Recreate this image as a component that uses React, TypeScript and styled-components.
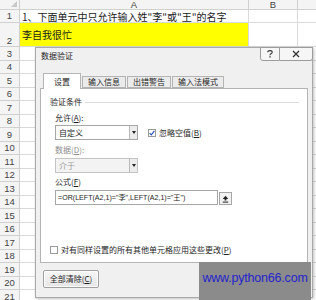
import { createGlobalStyle, styled } from "styled-components";

const GlobalStyle = createGlobalStyle`
  *, *::before, *::after { box-sizing: border-box; }
  html, body { margin: 0; padding: 0; background: #fff; }
  body {
    width: 316px;
    height: 300px;
    overflow: hidden;
    font-family: "Noto Sans CJK SC", sans-serif;
  }
`;

const Page = styled.div`
  position: relative;
  width: 316px;
  height: 300px;
  overflow: hidden;
`;

const Sheet = styled.div`
  display: grid;
  grid-template-columns: 20px 229px 49px 40px;
  grid-template-rows: 10px 13px 24px repeat(20, 13.5px);
`;

const Cell = styled.div<{ $fill?: string; $top?: boolean }>`
  border-right: 1px solid #dadada;
  border-bottom: 1px solid #dadada;
  background: ${(p) => p.$fill ?? "#fff"};
  font-size: 10px;
  color: #1a1a1a;
  white-space: nowrap;
  overflow: visible;
  display: flex;
  align-items: ${(p) => (p.$top ? "flex-start" : "center")};
  padding: ${(p) => (p.$top ? "4px" : "0")} 0 0 2px;
`;

const Head = styled.div<{ $align?: string }>`
  border-right: 1px solid #d0d0d0;
  border-bottom: 1px solid #d0d0d0;
  background: #f4f4f4;
  color: #444;
  font-family: "Liberation Sans", sans-serif;
  font-size: 9.5px;
  display: flex;
  justify-content: center;
  align-items: ${(p) => p.$align ?? "center"};
  padding-bottom: ${(p) => (p.$align === "flex-end" ? "1px" : "0")};
  line-height: 1;
`;

const Corner = styled(Head)`
  position: relative;
  &::after {
    content: "";
    position: absolute;
    right: 2px;
    bottom: 2px;
    border-left: 6px solid transparent;
    border-bottom: 6px solid #c8c8c8;
  }
`;

const Dialog = styled.div`
  position: absolute;
  left: 35px;
  top: 47px;
  width: 278px;
  height: 251px;
  background: #f0f0f0;
  border: 1px solid #a9a9a9;
  box-shadow: 1px 1px 3px rgba(0, 0, 0, 0.25);
  display: flex;
  flex-direction: column;
  font-family: "Noto Sans CJK SC", sans-serif;
  font-size: 8px;
  line-height: 12px;
  color: #1e1e1e;
`;

const TitleBar = styled.div`
  height: 16px;
  display: flex;
`;

const Title = styled.div`
  flex: 1;
  padding-left: 5px;
  align-self: center;
`;

const Controls = styled.div`
  display: flex;
  margin: -1px -1px 0 0;
  align-self: flex-start;
`;

const CtrlButton = styled.div<{ $w: number }>`
  width: ${(p) => p.$w}px;
  height: 14px;
  border: 1px solid #9c9c9c;
  background: #f6f6f6;
  display: flex;
  align-items: center;
  justify-content: center;
  & + & { border-left: none; }
  &:first-child { border-bottom-left-radius: 3px; }
  &:last-child { border-bottom-right-radius: 3px; }
`;

const Body = styled.div`
  padding: 9px 4px 0 4px;
  display: flex;
  flex-direction: column;
`;

const Tabs = styled.div`
  display: flex;
  align-items: flex-end;
  height: 15px;
  margin-left: 3px;
  position: relative;
  z-index: 1;
`;

const Tab = styled.div<{ $active?: boolean }>`
  height: ${(p) => (p.$active ? 16 : 12)}px;
  padding: 0 ${(p) => (p.$active ? 10 : 5)}px;
  border: 1px solid #b4b4b4;
  border-bottom: ${(p) => (p.$active ? "none" : "1px solid #b4b4b4")};
  background: ${(p) => (p.$active ? "#fff" : "#ebebeb")};
  margin-left: ${(p) => (p.$active ? 0 : 1)}px;
  display: flex;
  align-items: center;
  line-height: 10px;
  margin-bottom: ${(p) => (p.$active ? -1 : 0)}px;
`;

const Panel = styled.div`
  height: 175px;
  background: #fff;
  border: 1px solid #b4b4b4;
  padding: 7px 8px 0 9px;
  display: flex;
  flex-direction: column;
`;

const Group = styled.div`
  display: flex;
  align-items: center;
  gap: 3px;
  &::after {
    content: "";
    flex: 1;
    height: 1px;
    background: #dcdcdc;
  }
`;

const Field = styled.div`
  margin-left: 5px;
  display: flex;
  flex-direction: column;
`;

const Label = styled.div<{ $gap: number; $muted?: boolean }>`
  margin-top: ${(p) => p.$gap}px;
  color: ${(p) => (p.$muted ? "#8d8d8d" : "#1e1e1e")};
`;

const Line = styled.div<{ $gap: number }>`
  margin-top: ${(p) => p.$gap}px;
  display: flex;
  align-items: center;
`;

const Select = styled.div<{ $disabled?: boolean }>`
  width: 83px;
  height: 15px;
  border: 1px solid ${(p) => (p.$disabled ? "#c4c4c4" : "#a6a6a6")};
  background: ${(p) => (p.$disabled ? "#f3f3f3" : "#fff")};
  color: ${(p) => (p.$disabled ? "#9a9a9a" : "#1e1e1e")};
  display: flex;
  align-items: center;
  padding-left: 3px;
`;

const SelectText = styled.div`
  flex: 1;
`;

const Arrow = styled.div`
  width: 8px;
  height: 13px;
  border-left: 1px solid #b8b8b8;
  background: #ececec;
  display: flex;
  align-items: center;
  justify-content: center;
  &::after {
    content: "";
    border-left: 2.5px solid transparent;
    border-right: 2.5px solid transparent;
    border-top: 3px solid #222;
  }
`;

const Check = styled.div`
  width: 8px;
  height: 8px;
  border: 1px solid #9a9a9a;
  background: #fff;
  display: flex;
  align-items: center;
  justify-content: center;
`;

const CheckLabel = styled.div`
  display: flex;
  align-items: center;
  gap: 3px;
  margin-left: 10px;
`;

const Formula = styled.div`
  width: 163px;
  height: 15px;
  border: 1px solid #a6a6a6;
  background: #fff;
  padding-left: 2px;
  display: flex;
  align-items: center;
  white-space: nowrap;
  overflow: hidden;
  font-family: "Liberation Sans", "Noto Sans CJK SC", sans-serif;
  font-size: 7.1px;
`;

const RangeButton = styled.div`
  width: 13px;
  height: 13px;
  margin-left: 1px;
  margin-top: 2px;
  border: 1px solid #a6a6a6;
  background: #f2f2f2;
  display: flex;
  align-items: center;
  justify-content: center;
`;

const ApplyRow = styled.div`
  margin-top: auto;
  margin-bottom: 6px;
  display: flex;
  align-items: center;
  gap: 3px;
  white-space: nowrap;
`;

const Footer = styled.div`
  padding: 7px 0 0 3px;
`;

const Button = styled.div`
  width: 56px;
  height: 18px;
  border: 1px solid #a0a0a0;
  border-radius: 2px;
  background: linear-gradient(#f6f6f6, #e6e6e6);
  box-shadow: inset 0 0 0 1px #fdfdfd;
  display: flex;
  align-items: center;
  justify-content: center;
`;

const Watermark = styled.div`
  position: absolute;
  left: 199px;
  top: 262px;
  width: 112px;
  height: 38px;
  background: #8b8b8b;
  display: flex;
  align-items: center;
  justify-content: center;
  padding-bottom: 6px;
  color: #2424cc;
  font-family: "Liberation Sans", sans-serif;
  font-size: 12.5px;
  letter-spacing: -0.2px;
`;

const rows = Array.from({ length: 20 }, (_, i) => i + 3);

export default function App() {
  return (
    <Page>
      <GlobalStyle />
      <Sheet>
        <Corner />
        <Head>A</Head>
        <Head>B</Head>
        <Head />

        <Head>1</Head>
        <Cell>1、下面单元中只允许输入姓"李"或"王"的名字</Cell>
        <Cell />
        <Cell />

        <Head $align="flex-end">2</Head>
        <Cell $fill="#ffff00" $top>
          李自我很忙
        </Cell>
        <Cell />
        <Cell />

        {rows.map((r) => (
          <RowCells key={r} n={r} />
        ))}
      </Sheet>

      <Dialog>
        <TitleBar>
          <Title>数据验证</Title>
          <Controls>
            <CtrlButton $w={20}>
              <svg width="6" height="8" viewBox="0 0 6 8">
                <path d="M0.8 2.2 Q0.8 0.6 3 0.6 Q5.2 0.6 5.2 2.2 Q5.2 3.3 3.6 3.9 Q3 4.2 3 5.2" fill="none" stroke="#333" strokeWidth="1.1" />
                <rect x="2.4" y="6.2" width="1.3" height="1.3" fill="#333" />
              </svg>
            </CtrlButton>
            <CtrlButton $w={33}>
              <svg width="8" height="8" viewBox="0 0 8 8">
                <path d="M1 1 L7 7 M7 1 L1 7" stroke="#333" strokeWidth="1.3" />
              </svg>
            </CtrlButton>
          </Controls>
        </TitleBar>

        <Body>
          <Tabs>
            <Tab $active>设置</Tab>
            <Tab>输入信息</Tab>
            <Tab>出错警告</Tab>
            <Tab>输入法模式</Tab>
          </Tabs>
          <Panel>
            <Group>验证条件</Group>
            <Field>
              <Label $gap={4}>
                允许(<u>A</u>):
              </Label>
              <Line $gap={1}>
                <Select>
                  <SelectText>自定义</SelectText>
                  <Arrow />
                </Select>
                <CheckLabel>
                  <Check>
                    <svg width="6" height="6" viewBox="0 0 6 6">
                      <path d="M0.6 3.2 L2.3 4.9 L5.4 0.8" fill="none" stroke="#2a55b8" strokeWidth="1.2" />
                    </svg>
                  </Check>
                  <span>
                    忽略空值(<u>B</u>)
                  </span>
                </CheckLabel>
              </Line>
              <Label $gap={4} $muted>
                数据(<u>D</u>):
              </Label>
              <Line $gap={2}>
                <Select $disabled>
                  <SelectText>介于</SelectText>
                  <Arrow />
                </Select>
              </Line>
              <Label $gap={3}>
                公式(<u>F</u>)
              </Label>
              <Line $gap={2}>
                <Formula>=OR(LEFT(A2,1)="李",LEFT(A2,1)="王")</Formula>
                <RangeButton>
                  <svg width="7" height="8" viewBox="0 0 7 8">
                    <path d="M3.5 0.8 L6.3 4 L4.4 4 L4.4 5.6 L2.6 5.6 L2.6 4 L0.7 4 Z" fill="#222" />
                    <rect x="0.7" y="6.6" width="5.6" height="1" fill="#222" />
                  </svg>
                </RangeButton>
              </Line>
            </Field>
            <ApplyRow>
              <Check />
              <span>
                对有同样设置的所有其他单元格应用这些更改(<u>P</u>)
              </span>
            </ApplyRow>
          </Panel>
          <Footer>
            <Button>
              全部清除(<u>C</u>)
            </Button>
          </Footer>
        </Body>
      </Dialog>

      <Watermark>www.python66.com</Watermark>
    </Page>
  );
}

function RowCells({ n }: { n: number }) {
  return (
    <>
      <Head>{n}</Head>
      <Cell />
      <Cell />
      <Cell />
    </>
  );
}
